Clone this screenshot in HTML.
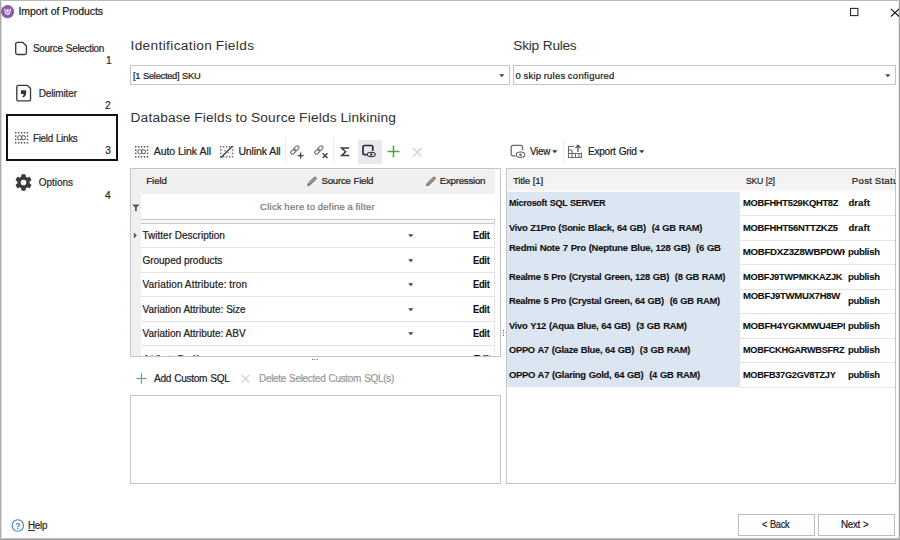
<!DOCTYPE html>
<html><head><meta charset="utf-8">
<style>
*{box-sizing:border-box;margin:0;padding:0}
html,body{width:900px;height:540px;overflow:hidden;background:#fff}
body{font-family:"Liberation Sans","DejaVu Sans",sans-serif;font-size:10px;color:#222;position:relative}
.abs{position:absolute}
.tx{transform-origin:0 0;-webkit-text-stroke:0.22px;position:absolute;white-space:nowrap;line-height:20px;height:20px}
.clip{position:absolute;height:20px;overflow:hidden}
.box{position:absolute;border:1px solid #c4c4c4;background:#fff}
.ln{position:absolute;background:#e3e3e3;height:1px}
.arr{position:absolute;width:0;height:0;border-left:2.8px solid transparent;border-right:2.8px solid transparent;border-top:3px solid #444;margin-left:-0.3px}
</style></head><body>
<!-- window border -->
<div class="abs" style="left:0;top:0;width:900px;height:1px;background:#b9b9b9"></div>
<div class="abs" style="left:0px;top:0;width:1px;height:540px;background:#acacac"></div><div class="abs" style="left:1px;top:0;width:1px;height:540px;background:#dedede"></div>
<div class="abs" style="left:898px;top:0;width:1px;height:539px;background:#e4e4e4"></div><div class="abs" style="left:899px;top:0;width:1px;height:540px;background:#a6a6a6;z-index:5"></div>
<div class="abs" style="left:0;top:538px;width:900px;height:1px;background:#bdbdbd"></div><div class="abs" style="left:0;top:539px;width:900px;height:1px;background:#a2a2a2"></div>

<!-- title bar -->
<svg class="abs" style="left:0px;top:4px" width="16" height="16" viewBox="0 0 16 16"><circle cx="7.6" cy="7.6" r="6.6" fill="#8d5bab"/><path d="M4.300 4.800h1.100l.4 3.300a1.800 1.800 0 0 0 3.600 0l.4-3.300h1.100l-.5 3.800a2.850 2.850 0 0 1-5.600 0z" fill="#fff"/><path d="M6.600 5.200h2v2.500a1 1 0 0 1-2 0z" fill="#fff"/></svg>
<svg class="abs" style="left:849px;top:7px" width="11" height="11"><rect x="1.500" y="1.400" width="7.400" height="7.200" fill="none" stroke="#2a2a2a" stroke-width="1.100"/></svg>
<svg class="abs" style="left:889px;top:6.500px" width="11" height="11"><path d="M1.800 1.900L10.200 9.500M10.200 1.900L1.800 9.500" stroke="#1a1a1a" stroke-width="1.200" fill="none"/></svg>

<!-- sidebar icons -->
<svg class="abs" style="left:14px;top:40px" width="15" height="17" viewBox="0 0 15 17"><path d="M3.400 2.300h5.200l3.800 3.800v6.700a1.700 1.700 0 0 1-1.700 1.700h-7.300a1.700 1.700 0 0 1-1.700-1.700v-8.800a1.700 1.700 0 0 1 1.700-1.700z" fill="#fff" stroke="#3a3a3a" stroke-width="1.350" stroke-linejoin="round"/></svg>
<svg class="abs" style="left:15px;top:84px" width="18" height="19" viewBox="0 0 18 19"><path d="M3.300 1.400h9.200l3 3v11a1.500 1.500 0 0 1-1.500 1.500h-10.700a1.500 1.500 0 0 1-1.500-1.500v-12.500a1.500 1.500 0 0 1 1.500-1.500z" fill="#fff" stroke="#3a3a3a" stroke-width="1.350" stroke-linejoin="round"/><path d="M5.900 6.200h5.300v3.400q0 2.700-3 3.900l-.9-1.100q1.500-.9 1.500-2.300h-2.900z" fill="#333"/></svg>
<div class="abs" style="left:6px;top:114px;width:112px;height:47px;border:2px solid #111"></div>
<svg class="abs" style="left:14.5px;top:132.2px" width="14" height="12" viewBox="0 0 14 12"><g fill="#4a4a4a"><rect x="0.00" y="0.00" width="1.450" height="1.450"/><rect x="0.00" y="10.10" width="1.450" height="1.450"/><rect x="2.95" y="0.00" width="1.450" height="1.450"/><rect x="2.95" y="10.10" width="1.450" height="1.450"/><rect x="5.90" y="0.00" width="1.450" height="1.450"/><rect x="5.90" y="10.10" width="1.450" height="1.450"/><rect x="8.85" y="0.00" width="1.450" height="1.450"/><rect x="8.85" y="10.10" width="1.450" height="1.450"/><rect x="11.80" y="0.00" width="1.450" height="1.450"/><rect x="11.80" y="10.10" width="1.450" height="1.450"/><rect x="0.00" y="3.40" width="1.450" height="1.450"/><rect x="11.80" y="3.40" width="1.450" height="1.450"/><rect x="0.00" y="6.70" width="1.450" height="1.450"/><rect x="11.80" y="6.70" width="1.450" height="1.450"/></g><rect x="2.800" y="3.700" width="3.900" height="4" rx="1.500" fill="none" stroke="#555" stroke-width="1"/><rect x="6.500" y="3.700" width="3.900" height="4" rx="1.500" fill="none" stroke="#555" stroke-width="1"/></svg>
<svg class="abs" style="left:15px;top:174px" width="17" height="17" viewBox="2 2 20 20"><path fill="#3a3a3a" d="M19.140 12.940a7.070 7.070 0 0 0 0-1.880l2.030-1.580a.5.5 0 0 0 .12-.61l-1.920-3.320a.5.5 0 0 0-.59-.22l-2.390.96a7.030 7.030 0 0 0-1.620-.94l-.36-2.540a.5.5 0 0 0-.48-.41h-3.840a.5.5 0 0 0-.47.410l-.36 2.540c-.59.240-1.130.57-1.620.94l-2.390-.96a.5.5 0 0 0-.59.220L2.740 8.870a.5.5 0 0 0 .12.610l2.030 1.580a7.070 7.070 0 0 0 0 1.880l-2.030 1.580a.5.5 0 0 0-.12.610l1.920 3.320c.12.220.37.290.59.220l2.390-.96c.5.380 1.030.7 1.620.94l.36 2.540c.5.240.24.410.48.410h3.840c.24 0 .44-.17.470-.41l.36-2.540c.59-.24 1.130-.56 1.620-.94l2.390.96c.22.080.47 0 .59-.22l1.920-3.320a.5.500 0 0 0-.12-.61zM12 15.300a3.300 3.300 0 1 1 0-6.600 3.300 3.300 0 0 1 0 6.600z"/></svg>
<!-- help icon -->
<svg class="abs" style="left:10px;top:518px" width="16" height="16" viewBox="0 0 16 16"><circle cx="7.800" cy="7.500" r="5.700" fill="#fff" stroke="#3f7fd0" stroke-width="1.100"/><text x="7.800" y="10.500" font-size="8.500" font-family="Liberation Sans,sans-serif" font-weight="bold" fill="#3f7fd0" text-anchor="middle">?</text></svg>

<!-- combos -->
<div class="box" style="left:130px;top:65px;width:380px;height:20px"></div>
<svg class="abs" style="left:498.8px;top:74.0px" width="6" height="4" viewBox="0 0 6 4"><path d="M0.200 0.300h5.200l-2.600 2.900z" fill="#444"/></svg>
<div class="box" style="left:513px;top:65px;width:383px;height:20px"></div>
<svg class="abs" style="left:884.8px;top:74.0px" width="6" height="4" viewBox="0 0 6 4"><path d="M0.200 0.300h5.200l-2.600 2.900z" fill="#444"/></svg>

<!-- left toolbar -->
<svg class="abs" style="left:135px;top:146.2px" width="14" height="12" viewBox="0 0 14 12"><g fill="#4a4a4a"><rect x="0.00" y="0.00" width="1.450" height="1.450"/><rect x="0.00" y="10.10" width="1.450" height="1.450"/><rect x="2.95" y="0.00" width="1.450" height="1.450"/><rect x="2.95" y="10.10" width="1.450" height="1.450"/><rect x="5.90" y="0.00" width="1.450" height="1.450"/><rect x="5.90" y="10.10" width="1.450" height="1.450"/><rect x="8.85" y="0.00" width="1.450" height="1.450"/><rect x="8.85" y="10.10" width="1.450" height="1.450"/><rect x="11.80" y="0.00" width="1.450" height="1.450"/><rect x="11.80" y="10.10" width="1.450" height="1.450"/><rect x="0.00" y="3.40" width="1.450" height="1.450"/><rect x="11.80" y="3.40" width="1.450" height="1.450"/><rect x="0.00" y="6.70" width="1.450" height="1.450"/><rect x="11.80" y="6.70" width="1.450" height="1.450"/></g><rect x="2.800" y="3.700" width="3.900" height="4" rx="1.500" fill="none" stroke="#555" stroke-width="1"/><rect x="6.500" y="3.700" width="3.900" height="4" rx="1.500" fill="none" stroke="#555" stroke-width="1"/></svg>
<svg class="abs" style="left:219.5px;top:145.6px" width="14" height="13" viewBox="0 0 14 13"><g fill="#666"><rect x="0.00" y="0.00" width="1.450" height="1.450"/><rect x="0.00" y="10.10" width="1.450" height="1.450"/><rect x="2.95" y="0.00" width="1.450" height="1.450"/><rect x="2.95" y="10.10" width="1.450" height="1.450"/><rect x="5.90" y="0.00" width="1.450" height="1.450"/><rect x="5.90" y="10.10" width="1.450" height="1.450"/><rect x="8.85" y="0.00" width="1.450" height="1.450"/><rect x="8.85" y="10.10" width="1.450" height="1.450"/><rect x="11.80" y="0.00" width="1.450" height="1.450"/><rect x="11.80" y="10.10" width="1.450" height="1.450"/><rect x="0.00" y="3.40" width="1.450" height="1.450"/><rect x="11.80" y="3.40" width="1.450" height="1.450"/><rect x="0.00" y="6.70" width="1.450" height="1.450"/><rect x="11.80" y="6.70" width="1.450" height="1.450"/></g><path d="M4 4.500l1.800 0.800M7.500 6l1.800 0.800" stroke="#777" stroke-width="1"/><path d="M0.800 11.800L12.800 -0.300" stroke="#444" stroke-width="1.400"/></svg>
<div class="abs" style="left:285px;top:140px;width:1px;height:23px;background:#ececec"></div>
<!-- link+ -->
<svg class="abs" style="left:290px;top:144.500px" width="15" height="15" viewBox="0 0 15 15"><g fill="none" stroke="#7a7a7a" stroke-width="1.150"><rect x="-2.900" y="-1.700" width="5.800" height="3.400" rx="1.700" transform="translate(3.300 6.700) rotate(-42)"/><rect x="-2.900" y="-1.700" width="5.800" height="3.400" rx="1.700" transform="translate(6.300 3.500) rotate(-42)"/></g><path d="M10.600 7.600v6M7.600 10.600h6" stroke="#444" stroke-width="1.400"/></svg>
<svg class="abs" style="left:313.500px;top:144.500px" width="16" height="15" viewBox="0 0 16 15"><g fill="none" stroke="#7a7a7a" stroke-width="1.150"><rect x="-2.900" y="-1.700" width="5.800" height="3.400" rx="1.700" transform="translate(3.300 6.700) rotate(-42)"/><rect x="-2.900" y="-1.700" width="5.800" height="3.400" rx="1.700" transform="translate(6.300 3.500) rotate(-42)"/></g><path d="M8.700 8.300l4.800 4.800M13.500 8.300l-4.800 4.800" stroke="#444" stroke-width="1.400"/></svg>
<div class="abs" style="left:333px;top:140px;width:1px;height:23px;background:#ececec"></div>
<svg class="abs" style="left:340px;top:147px" width="11" height="10" viewBox="0 0 11 10"><path d="M9.200 1.100h-7.600l4.100 3.700-4.100 3.800h7.800" fill="none" stroke="#3c3c3c" stroke-width="1.500" stroke-linejoin="miter"/></svg>
<div class="abs" style="left:357.500px;top:140px;width:24.500px;height:24px;background:#e8e8ee"></div>
<svg class="abs" style="left:361px;top:144px" width="16" height="15" viewBox="0 0 16 15"><path d="M5.800 10.700h-2.300a1.500 1.500 0 0 1-1.500-1.500v-6.200a1.500 1.500 0 0 1 1.500-1.500h6.800a1.500 1.500 0 0 1 1.500 1.500v4" fill="none" stroke="#2e2e2e" stroke-width="1.700"/><ellipse cx="10.300" cy="10.500" rx="4" ry="2.200" fill="#e8e8ee" stroke="#333" stroke-width="1.100"/><circle cx="10.300" cy="10.500" r="1.200" fill="#333"/></svg>
<svg class="abs" style="left:387px;top:145px" width="13" height="13"><path d="M6.500 0.500v12M0.500 6.500h12" stroke="#4aa548" stroke-width="1.500"/></svg>
<svg class="abs" style="left:412px;top:147px" width="11" height="11"><path d="M1 1l8.500 8.500M9.500 1L1 9.500" stroke="#cfcfcf" stroke-width="1.200"/></svg>

<!-- left grid -->
<div class="box" style="left:130px;top:168px;width:371px;height:189px;border-color:#c6c6c6;overflow:hidden">
  <div class="abs" style="left:0;top:0;width:364px;height:187px;background:#f0f0f0"></div>
  <div class="abs" style="left:10px;top:24.500px;width:355px;height:163px;background:#fff"></div>
  <div class="abs" style="left:10px;top:50px;width:354px;height:4.500px;border:1px solid #c8c8c8;border-left:none;background:#f7f7f7"></div>
  <div class="ln" style="left:10px;top:78px;width:354px"></div>
  <div class="ln" style="left:10px;top:103px;width:354px"></div>
  <div class="ln" style="left:10px;top:127px;width:354px"></div>
  <div class="ln" style="left:10px;top:152px;width:354px"></div>
  <div class="ln" style="left:10px;top:176px;width:354px"></div>
  <div class="abs" style="left:363px;top:54px;width:1px;height:140px;background:#e6e6e6"></div>
</div>
<!-- pencil icons -->
<svg class="abs" style="left:306px;top:176px" width="12" height="11" viewBox="0 0 12 11"><path d="M1.500 9.800l.8-2.700 5.800-5.600a1.200 1.200 0 0 1 1.900 1.800l-5.900 5.600z" fill="#9a9a9a" stroke="#666" stroke-width="0.900"/></svg>
<svg class="abs" style="left:425px;top:176px" width="12" height="11" viewBox="0 0 12 11"><path d="M1.500 9.800l.8-2.700 5.800-5.600a1.200 1.200 0 0 1 1.900 1.800l-5.900 5.600z" fill="#9a9a9a" stroke="#666" stroke-width="0.900"/></svg>
<!-- filter icon -->
<svg class="abs" style="left:132px;top:204px" width="8" height="8" viewBox="0 0 8 8"><path d="M0.300 0.500h7.200l-2.800 3v3.800h-1.600v-3.800z" fill="#555"/></svg>
<!-- row indicator -->
<svg class="abs" style="left:133px;top:232px" width="5" height="7"><path d="M0.800 0.500l3 3-3 3z" fill="#555"/></svg>
<!-- dropdown arrows in rows -->
<svg class="abs" style="left:407.8px;top:234.0px" width="6" height="4" viewBox="0 0 6 4"><path d="M0.200 0.300h5.200l-2.600 2.900z" fill="#444"/></svg>
<svg class="abs" style="left:407.8px;top:258.5px" width="6" height="4" viewBox="0 0 6 4"><path d="M0.200 0.300h5.200l-2.600 2.900z" fill="#444"/></svg>
<svg class="abs" style="left:407.8px;top:283.0px" width="6" height="4" viewBox="0 0 6 4"><path d="M0.200 0.300h5.200l-2.600 2.900z" fill="#444"/></svg>
<svg class="abs" style="left:407.8px;top:307.5px" width="6" height="4" viewBox="0 0 6 4"><path d="M0.200 0.300h5.200l-2.600 2.900z" fill="#444"/></svg>
<svg class="abs" style="left:407.8px;top:332.0px" width="6" height="4" viewBox="0 0 6 4"><path d="M0.200 0.300h5.200l-2.600 2.900z" fill="#444"/></svg>
<!-- partial 6th row text (clipped) -->
<div class="abs" style="left:140px;top:345px;width:355px;height:11px;overflow:hidden">
  <span class="tx" style="left:3px;top:4.600px;font-size:10px;color:#222;letter-spacing:-0.55px">Attribute Position</span>
  <span class="tx" style="left:333.500px;top:4.600px;font-size:10px;color:#111;font-weight:bold;letter-spacing:-0.4px">Edit</span>
</div>
<!-- splitters -->
<div class="abs" style="left:502.800px;top:329.500px;width:1.400px;height:1.400px;background:#555;box-shadow:0 2.400px 0 #555,0 4.800px 0 #555"></div>
<div class="abs" style="left:311.500px;top:358.700px;width:1.400px;height:1.400px;background:#555;box-shadow:2.400px 0 0 #555,4.800px 0 0 #555"></div>

<!-- custom sql -->
<svg class="abs" style="left:136px;top:373px" width="11" height="11"><path d="M5.500 0.300v10.400M0.300 5.500h10.400" stroke="#56b457" stroke-width="1.200"/></svg>
<svg class="abs" style="left:241px;top:374px" width="10" height="10"><path d="M0.800 0.800l7.700 7.700M8.500 0.800L0.800 8.500" stroke="#cfcfcf" stroke-width="1.100"/></svg>
<div class="box" style="left:130px;top:395px;width:371px;height:89px"></div>

<!-- right toolbar -->
<svg class="abs" style="left:510px;top:144px" width="16" height="15" viewBox="0 0 16 15"><path d="M5.500 11.800h-2.500a1.800 1.800 0 0 1-1.800-1.800v-6.800a1.800 1.800 0 0 1 1.800-1.800h7.800a1.800 1.800 0 0 1 1.800 1.800v3" fill="none" stroke="#6a6a6a" stroke-width="1.300"/><ellipse cx="10.500" cy="10.700" rx="4.300" ry="2.700" fill="#fff" stroke="#6a6a6a" stroke-width="1.100"/><circle cx="10.500" cy="10.700" r="1.300" fill="#6a6a6a"/></svg>
<svg class="abs" style="left:552.3px;top:150.0px" width="6" height="4" viewBox="0 0 6 4"><path d="M0.200 0.300h5.200l-2.600 2.900z" fill="#333"/></svg>
<div class="abs" style="left:563px;top:140px;width:1px;height:23px;background:#ececec"></div>
<svg class="abs" style="left:567px;top:144px" width="16" height="15" viewBox="0 0 16 15"><g fill="none" stroke="#6a6a6a" stroke-width="1.100"><path d="M7 2.500h-5.500v11h13v-5"/><path d="M1.500 9.500h13M5 6v7.500M8.500 9.500v4M12 9.500v4M1.500 6h3.500"/></g><path d="M11 8v-6M8.500 4l2.500-2.700 2.500 2.700" fill="none" stroke="#5a5a5a" stroke-width="1.300"/></svg>
<svg class="abs" style="left:638.8px;top:150.0px" width="6" height="4" viewBox="0 0 6 4"><path d="M0.200 0.300h5.200l-2.600 2.900z" fill="#333"/></svg>

<!-- right grid -->
<div class="box" style="left:506px;top:168px;width:390px;height:316px;border-color:#c6c6c6;overflow:hidden">
  <div class="abs" style="left:0;top:0;width:388px;height:20.600px;background:#f3f3f3"></div><div class="abs" style="left:0;top:20.600px;width:388px;height:2px;background:#fafafa"></div>
  <div class="abs" style="left:0;top:22.600px;width:233px;height:195.400px;background:#dce6f3"></div>
  <div class="ln" style="left:233px;top:46px;width:155px"></div>
  <div class="ln" style="left:233px;top:71px;width:155px"></div>
  <div class="ln" style="left:233px;top:95px;width:155px"></div>
  <div class="ln" style="left:233px;top:120px;width:155px"></div>
  <div class="ln" style="left:233px;top:144px;width:155px"></div>
  <div class="ln" style="left:233px;top:169px;width:155px"></div>
  <div class="ln" style="left:233px;top:193px;width:155px"></div>
  <div class="ln" style="left:233px;top:218px;width:155px"></div>
</div>

<!-- buttons -->
<div class="box" style="left:738px;top:514px;width:77px;height:22px;border-color:#bcbcbc"></div>
<div class="box" style="left:818px;top:514px;width:77px;height:22px;border-color:#bcbcbc"></div>

<span class="tx" id="t0" style="left:18.50px;top:1.00px;font-size:10.5px;color:#1a1a1a;letter-spacing:-0.100px;word-spacing:0.200px;transform:scaleX(1.0000);">Import of Products</span>
<span class="tx" id="t1" style="left:33.30px;top:39.00px;font-size:10px;color:#2a2a2a;letter-spacing:-0.300px;word-spacing:0.600px;transform:scaleX(0.9957);">Source Selection</span>
<span class="tx" id="t2" style="left:106.00px;top:51.00px;font-size:10.2px;color:#2a2a2a;letter-spacing:0.000px;word-spacing:0.000px;transform:scaleX(1.0000);">1</span>
<span class="tx" id="t3" style="left:38.70px;top:84.00px;font-size:10px;color:#2a2a2a;letter-spacing:-0.144px;word-spacing:0.288px;transform:scaleX(1.0000);">Delimiter</span>
<span class="tx" id="t4" style="left:105.00px;top:96.00px;font-size:10.2px;color:#2a2a2a;letter-spacing:0.000px;word-spacing:0.000px;transform:scaleX(1.0000);">2</span>
<span class="tx" id="t5" style="left:33.30px;top:129.00px;font-size:10px;color:#2a2a2a;letter-spacing:-0.300px;word-spacing:0.600px;transform:scaleX(0.9843);">Field Links</span>
<span class="tx" id="t6" style="left:105.30px;top:141.00px;font-size:10.2px;color:#2a2a2a;letter-spacing:0.000px;word-spacing:0.000px;transform:scaleX(1.0000);">3</span>
<span class="tx" id="t7" style="left:38.70px;top:173.00px;font-size:10px;color:#2a2a2a;letter-spacing:-0.028px;word-spacing:0.056px;transform:scaleX(1.0000);">Options</span>
<span class="tx" id="t8" style="left:105.00px;top:186.00px;font-size:10.2px;color:#2a2a2a;letter-spacing:0.000px;word-spacing:0.000px;transform:scaleX(1.0000);">4</span>
<span class="tx" id="t9" style="left:28.30px;top:516.00px;font-size:10px;color:#2a2a2a;letter-spacing:-0.300px;word-spacing:0.600px;transform:scaleX(0.9851);"><u>H</u>elp</span>
<span class="tx" id="t10" style="left:130.50px;top:36.00px;font-size:13.7px;color:#303030;letter-spacing:0.352px;word-spacing:-0.703px;transform:scaleX(1.0000);-webkit-text-stroke:0;">Identification Fields</span>
<span class="tx" id="t11" style="left:513.30px;top:36.00px;font-size:13.7px;color:#303030;letter-spacing:-0.291px;word-spacing:0.582px;transform:scaleX(1.0000);-webkit-text-stroke:0;">Skip Rules</span>
<span class="tx" id="t12" style="left:130.50px;top:108.00px;font-size:13.7px;color:#303030;letter-spacing:0.195px;word-spacing:-0.390px;transform:scaleX(1.0000);-webkit-text-stroke:0;">Database Fields to Source Fields Linkining</span>
<span class="tx" id="t13" style="left:132.80px;top:66.00px;font-size:9.5px;color:#222;letter-spacing:-0.300px;word-spacing:0.600px;transform:scaleX(0.9803);">[1 Selected] SKU</span>
<span class="tx" id="t14" style="left:515.50px;top:66.00px;font-size:9.5px;color:#222;letter-spacing:0.240px;word-spacing:-0.480px;transform:scaleX(1.0000);">0 skip rules configured</span>
<span class="tx" id="t15" style="left:153.80px;top:141.00px;font-size:10.5px;color:#222;letter-spacing:-0.075px;word-spacing:0.149px;transform:scaleX(1.0000);">Auto Link All</span>
<span class="tx" id="t16" style="left:238.40px;top:141.00px;font-size:10.5px;color:#222;letter-spacing:-0.127px;word-spacing:0.254px;transform:scaleX(1.0000);">Unlink All</span>
<span class="tx" id="t17" style="left:530.40px;top:141.00px;font-size:10.5px;color:#222;letter-spacing:-0.300px;word-spacing:0.600px;transform:scaleX(0.9364);">View</span>
<span class="tx" id="t18" style="left:587.80px;top:141.00px;font-size:10.5px;color:#222;letter-spacing:-0.300px;word-spacing:0.600px;transform:scaleX(0.9643);">Export Grid</span>
<span class="tx" id="t19" style="left:146.20px;top:171.00px;font-size:9.7px;color:#222;letter-spacing:-0.050px;word-spacing:0.100px;transform:scaleX(1.0000);">Field</span>
<span class="tx" id="t20" style="left:321.50px;top:171.00px;font-size:9.7px;color:#222;letter-spacing:-0.266px;word-spacing:0.531px;transform:scaleX(1.0000);">Source Field</span>
<span class="tx" id="t21" style="left:439.80px;top:171.00px;font-size:9.7px;color:#222;letter-spacing:-0.249px;word-spacing:0.497px;transform:scaleX(1.0000);">Expression</span>
<span class="tx" id="t22" style="left:260.00px;top:197.00px;font-size:9.5px;color:#777;letter-spacing:0.275px;word-spacing:-0.551px;transform:scaleX(1.0000);">Click here to define a filter</span>
<span class="tx" id="t23" style="left:142.50px;top:226.00px;font-size:10px;color:#222;letter-spacing:0.009px;word-spacing:-0.019px;transform:scaleX(1.0000);">Twitter Description</span>
<span class="tx" id="t24" style="left:473.20px;top:226.00px;font-size:10px;color:#111;letter-spacing:-0.300px;word-spacing:0.600px;transform:scaleX(0.9338);font-weight:bold;-webkit-text-stroke:0.12px;">Edit</span>
<span class="tx" id="t25" style="left:142.50px;top:251.00px;font-size:10px;color:#222;letter-spacing:-0.028px;word-spacing:0.056px;transform:scaleX(1.0000);">Grouped products</span>
<span class="tx" id="t26" style="left:473.20px;top:251.00px;font-size:10px;color:#111;letter-spacing:-0.300px;word-spacing:0.600px;transform:scaleX(0.9338);font-weight:bold;-webkit-text-stroke:0.12px;">Edit</span>
<span class="tx" id="t27" style="left:142.50px;top:275.00px;font-size:10px;color:#222;letter-spacing:0.176px;word-spacing:-0.352px;transform:scaleX(1.0000);">Variation Attribute: tron</span>
<span class="tx" id="t28" style="left:473.20px;top:275.00px;font-size:10px;color:#111;letter-spacing:-0.300px;word-spacing:0.600px;transform:scaleX(0.9338);font-weight:bold;-webkit-text-stroke:0.12px;">Edit</span>
<span class="tx" id="t29" style="left:142.50px;top:300.00px;font-size:10px;color:#222;letter-spacing:-0.005px;word-spacing:0.010px;transform:scaleX(1.0000);">Variation Attribute: Size</span>
<span class="tx" id="t30" style="left:473.20px;top:300.00px;font-size:10px;color:#111;letter-spacing:-0.300px;word-spacing:0.600px;transform:scaleX(0.9338);font-weight:bold;-webkit-text-stroke:0.12px;">Edit</span>
<span class="tx" id="t31" style="left:142.50px;top:324.00px;font-size:10px;color:#222;letter-spacing:-0.006px;word-spacing:0.013px;transform:scaleX(1.0000);">Variation Attribute: ABV</span>
<span class="tx" id="t32" style="left:473.20px;top:324.00px;font-size:10px;color:#111;letter-spacing:-0.300px;word-spacing:0.600px;transform:scaleX(0.9338);font-weight:bold;-webkit-text-stroke:0.12px;">Edit</span>
<span class="tx" id="t33" style="left:153.80px;top:368.00px;font-size:10.5px;color:#222;letter-spacing:-0.300px;word-spacing:0.600px;transform:scaleX(0.9595);">Add Custom SQL</span>
<span class="tx" id="t34" style="left:258.60px;top:369.00px;font-size:10px;color:#999;letter-spacing:-0.300px;word-spacing:0.600px;transform:scaleX(0.9965);">Delete Selected Custom SQL(s)</span>
<span class="tx" id="t35" style="left:512.90px;top:171.00px;font-size:9.7px;color:#222;letter-spacing:-0.168px;word-spacing:0.335px;transform:scaleX(1.0000);">Title [1]</span>
<span class="tx" id="t36" style="left:745.50px;top:171.00px;font-size:9.7px;color:#222;letter-spacing:-0.300px;word-spacing:0.600px;transform:scaleX(0.8978);">SKU [2]</span>
<span class="tx" id="t37" style="left:508.90px;top:193.00px;font-size:9.7px;color:#111;letter-spacing:-0.300px;word-spacing:0.600px;transform:scaleX(0.9298);font-weight:bold;-webkit-text-stroke:0.12px;">Microsoft SQL SERVER</span>
<div class="clip" style="left:740px;top:193.00px;width:105px"><span class="tx" id="t38" style="left:2.70px;top:0;font-size:9.7px;color:#111;letter-spacing:-0.300px;word-spacing:0.600px;transform:scaleX(0.9662);font-weight:bold;-webkit-text-stroke:0.12px;">MOBFHHT529KQHT8Z</span></div>
<span class="tx" id="t39" style="left:848.40px;top:193.00px;font-size:9.7px;color:#111;letter-spacing:0.017px;word-spacing:-0.034px;transform:scaleX(1.0000);font-weight:bold;-webkit-text-stroke:0.12px;">draft</span>
<span class="tx" id="t40" style="left:508.90px;top:218.00px;font-size:9.7px;color:#111;letter-spacing:-0.300px;word-spacing:0.600px;transform:scaleX(0.9671);font-weight:bold;-webkit-text-stroke:0.12px;">Vivo Z1Pro (Sonic Black, 64 GB)  (4 GB RAM)</span>
<div class="clip" style="left:740px;top:218.00px;width:105px"><span class="tx" id="t41" style="left:2.70px;top:0;font-size:9.7px;color:#111;letter-spacing:-0.300px;word-spacing:0.600px;transform:scaleX(0.9727);font-weight:bold;-webkit-text-stroke:0.12px;">MOBFHHT56NTTZKZ5</span></div>
<span class="tx" id="t42" style="left:848.40px;top:218.00px;font-size:9.7px;color:#111;letter-spacing:0.017px;word-spacing:-0.034px;transform:scaleX(1.0000);font-weight:bold;-webkit-text-stroke:0.12px;">draft</span>
<span class="tx" id="t43" style="left:508.90px;top:238.00px;font-size:9.7px;color:#111;letter-spacing:-0.300px;word-spacing:0.600px;transform:scaleX(0.9869);font-weight:bold;-webkit-text-stroke:0.12px;">Redmi Note 7 Pro (Neptune Blue, 128 GB)  (6 GB</span>
<div class="clip" style="left:740px;top:242.00px;width:105px"><span class="tx" id="t44" style="left:2.70px;top:0;font-size:9.7px;color:#111;letter-spacing:-0.271px;word-spacing:0.542px;transform:scaleX(1.0000);font-weight:bold;-webkit-text-stroke:0.12px;">MOBFDXZ3Z8WBPDWK</span></div>
<span class="tx" id="t45" style="left:848.40px;top:242.00px;font-size:9.7px;color:#111;letter-spacing:-0.300px;word-spacing:0.600px;transform:scaleX(0.9800);font-weight:bold;-webkit-text-stroke:0.12px;">publish</span>
<span class="tx" id="t46" style="left:508.90px;top:267.00px;font-size:9.7px;color:#111;letter-spacing:-0.300px;word-spacing:0.600px;transform:scaleX(0.9663);font-weight:bold;-webkit-text-stroke:0.12px;">Realme 5 Pro (Crystal Green, 128 GB)  (8 GB RAM)</span>
<div class="clip" style="left:740px;top:267.00px;width:105px"><span class="tx" id="t47" style="left:2.70px;top:0;font-size:9.7px;color:#111;letter-spacing:-0.300px;word-spacing:0.600px;transform:scaleX(0.9596);font-weight:bold;-webkit-text-stroke:0.12px;">MOBFJ9TWPMKKAZJK</span></div>
<span class="tx" id="t48" style="left:848.40px;top:267.00px;font-size:9.7px;color:#111;letter-spacing:-0.300px;word-spacing:0.600px;transform:scaleX(0.9800);font-weight:bold;-webkit-text-stroke:0.12px;">publish</span>
<span class="tx" id="t49" style="left:508.90px;top:291.00px;font-size:9.7px;color:#111;letter-spacing:-0.300px;word-spacing:0.600px;transform:scaleX(0.9646);font-weight:bold;-webkit-text-stroke:0.12px;">Realme 5 Pro (Crystal Green, 64 GB)  (6 GB RAM)</span>
<div class="clip" style="left:740px;top:286.00px;width:105px"><span class="tx" id="t50" style="left:2.70px;top:0;font-size:9.7px;color:#111;letter-spacing:-0.300px;word-spacing:0.600px;transform:scaleX(0.9867);font-weight:bold;-webkit-text-stroke:0.12px;">MOBFJ9TWMUX7H8W</span></div>
<span class="tx" id="t51" style="left:848.40px;top:291.00px;font-size:9.7px;color:#111;letter-spacing:-0.300px;word-spacing:0.600px;transform:scaleX(0.9800);font-weight:bold;-webkit-text-stroke:0.12px;">publish</span>
<span class="tx" id="t52" style="left:508.90px;top:316.00px;font-size:9.7px;color:#111;letter-spacing:-0.300px;word-spacing:0.600px;transform:scaleX(0.9680);font-weight:bold;-webkit-text-stroke:0.12px;">Vivo Y12 (Aqua Blue, 64 GB)  (3 GB RAM)</span>
<div class="clip" style="left:740px;top:316.00px;width:105px"><span class="tx" id="t53" style="left:2.70px;top:0;font-size:9.7px;color:#111;letter-spacing:-0.271px;word-spacing:0.542px;transform:scaleX(1.0000);font-weight:bold;-webkit-text-stroke:0.12px;">MOBFH4YGKMWU4EPL</span></div>
<span class="tx" id="t54" style="left:848.40px;top:316.00px;font-size:9.7px;color:#111;letter-spacing:-0.300px;word-spacing:0.600px;transform:scaleX(0.9800);font-weight:bold;-webkit-text-stroke:0.12px;">publish</span>
<span class="tx" id="t55" style="left:508.90px;top:340.00px;font-size:9.7px;color:#111;letter-spacing:-0.300px;word-spacing:0.600px;transform:scaleX(0.9645);font-weight:bold;-webkit-text-stroke:0.12px;">OPPO A7 (Glaze Blue, 64 GB)  (3 GB RAM)</span>
<div class="clip" style="left:740px;top:340.00px;width:105px"><span class="tx" id="t56" style="left:2.70px;top:0;font-size:9.7px;color:#111;letter-spacing:-0.300px;word-spacing:0.600px;transform:scaleX(0.9434);font-weight:bold;-webkit-text-stroke:0.12px;">MOBFCKHGARWBSFRZ</span></div>
<span class="tx" id="t57" style="left:848.40px;top:340.00px;font-size:9.7px;color:#111;letter-spacing:-0.300px;word-spacing:0.600px;transform:scaleX(0.9800);font-weight:bold;-webkit-text-stroke:0.12px;">publish</span>
<span class="tx" id="t58" style="left:508.90px;top:365.00px;font-size:9.7px;color:#111;letter-spacing:-0.300px;word-spacing:0.600px;transform:scaleX(0.9725);font-weight:bold;-webkit-text-stroke:0.12px;">OPPO A7 (Glaring Gold, 64 GB)  (4 GB RAM)</span>
<div class="clip" style="left:740px;top:365.00px;width:105px"><span class="tx" id="t59" style="left:2.70px;top:0;font-size:9.7px;color:#111;letter-spacing:-0.300px;word-spacing:0.600px;transform:scaleX(0.9489);font-weight:bold;-webkit-text-stroke:0.12px;">MOBFB37G2GV8TZJY</span></div>
<span class="tx" id="t60" style="left:848.40px;top:365.00px;font-size:9.7px;color:#111;letter-spacing:-0.300px;word-spacing:0.600px;transform:scaleX(0.9800);font-weight:bold;-webkit-text-stroke:0.12px;">publish</span>
<div class="clip" style="left:845px;top:171.00px;width:50.5px"><span class="tx" id="t61" style="left:6.80px;top:0;font-size:9.7px;color:#222;letter-spacing:0.269px;word-spacing:-0.538px;transform:scaleX(1.0000);">Post Status</span></div>
<span class="tx" id="t62" style="left:762.20px;top:515.00px;font-size:10px;color:#222;letter-spacing:-0.300px;word-spacing:0.600px;transform:scaleX(0.9212);">&lt; Back</span>
<span class="tx" id="t63" style="left:841.30px;top:515.00px;font-size:10px;color:#222;letter-spacing:-0.300px;word-spacing:0.600px;transform:scaleX(0.9792);">Next &gt;</span>
</body></html>
